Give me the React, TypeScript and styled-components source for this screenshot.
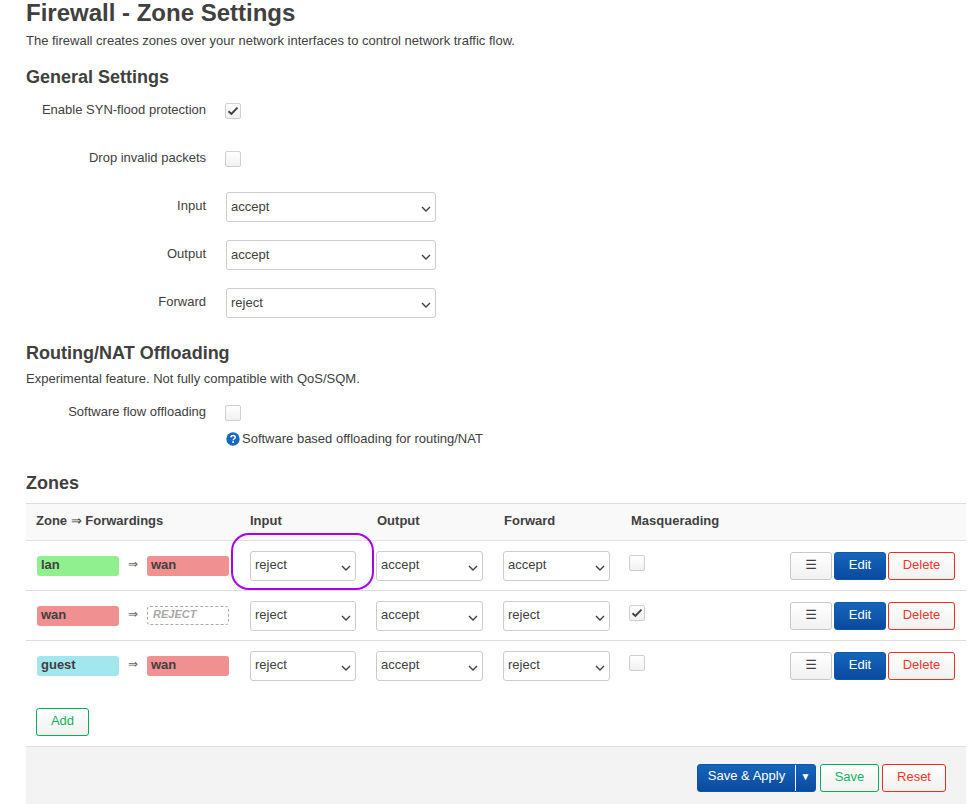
import React from "react";
import styled, { createGlobalStyle, css } from "styled-components";

const Global = createGlobalStyle`
  html, body { margin: 0; padding: 0; background: #fff; }
  body { font-family: "Liberation Sans", Arial, sans-serif; font-size: 13px; color: #404040; }
`;

const Page = styled.div`
  width: 940px;
  height: 804px;
  margin-left: 26px;
  display: flex;
  flex-direction: column;
  overflow: hidden;
`;

const Title = styled.h2`
  margin: 0;
  font-size: 24px;
  line-height: 25px;
  font-weight: 700;
  color: #404040;
`;

const Lead = styled.p`
  margin: 9px 0 0;
  font-size: 13px;
  line-height: 14px;
`;

const SectionTitle = styled.h3<{ $top: number }>`
  margin: ${(p) => p.$top}px 0 0;
  font-size: 18px;
  line-height: 20px;
  font-weight: 700;
  color: #404040;
`;

const FormRow = styled.div<{ $top?: number }>`
  display: grid;
  grid-template-columns: 180px 1fr;
  column-gap: 20px;
  height: 48px;
  margin-top: ${(p) => p.$top ?? 0}px;
`;

const Label = styled.label`
  text-align: right;
  line-height: 14px;
  padding-top: 7px;
`;

const FieldCheck = styled.div`
  padding-top: 7px;
  margin-left: -1px;
`;

const Box = styled.span`
  display: flex;
  align-items: center;
  justify-content: center;
  box-sizing: border-box;
  width: 16px;
  height: 16px;
  border: 1px solid #cfcfcf;
  border-radius: 2px;
  background: linear-gradient(#ffffff, #f1f1f1);
  box-shadow: inset 0 0 1px rgba(0, 0, 0, 0.05);
`;

const chevron =
  "url(\"data:image/svg+xml,%3Csvg xmlns='http://www.w3.org/2000/svg' width='10' height='6' viewBox='0 0 10 6'%3E%3Cpath d='M1 1l4 4 4-4' fill='none' stroke='%23404040' stroke-width='1.4'/%3E%3C/svg%3E\")";

const Select = styled.select<{ $width: number; $shift?: number }>`
  appearance: none;
  box-sizing: border-box;
  width: ${(p) => p.$width}px;
  height: 30px;
  margin-left: ${(p) => p.$shift ?? 0}px;
  padding: 0 0 2px 4px;
  font-family: "Liberation Sans", Arial, sans-serif;
  font-size: 13px;
  color: #404040;
  background: #fff ${chevron} no-repeat right 4px top 13px;
  border: 1px solid #cbcbcb;
  border-radius: 3px;
`;

const Intro = styled.p`
  margin: 9px 0 0;
  font-size: 13px;
  line-height: 14px;
`;

const Help = styled.div`
  display: flex;
  align-items: center;
  gap: 2px;
  margin: -14px 0 0 200px;
  height: 14px;
  font-size: 13px;
  line-height: 14px;
`;

const Table = styled.div`
  margin-top: 10px;
  border-top: 1px solid #dedede;
`;

const columns = css`
  display: grid;
  grid-template-columns: 214px 127px 127px 127px 1fr auto;
  padding: 0 11px 0 10px;
  border-bottom: 1px solid #dedede;
`;

const HeadRow = styled.div`
  ${columns}
  height: 36px;
  box-sizing: content-box;
  padding-bottom: 0;
  align-items: center;
  background: #f9f9f9;
  font-size: 13px;
  font-weight: 700;
  line-height: 14px;
  & > span { padding-bottom: 2px; }
`;

const ThinArrow = styled.span`
  font-weight: 400;
`;

const Row = styled.div<{ $last?: boolean }>`
  ${columns}
  height: 49px;
  align-items: center;
  ${(p) => p.$last && "border-bottom-color: transparent;"}
`;

const ZoneCell = styled.div`
  display: grid;
  grid-template-columns: 82px 28px 82px;
  margin-left: 1px;
  align-items: center;
`;

const Badge = styled.span<{ $color?: string }>`
  box-sizing: border-box;
  height: 20px;
  padding: 0 4px;
  border-radius: 3px;
  font-size: 13px;
  font-weight: 700;
  line-height: 17px;
  color: #404040;
  background: ${(p) => p.$color};
`;

const RejectBadge = styled.span`
  box-sizing: border-box;
  height: 19px;
  padding: 0 5px;
  border: 1px dashed #aaa;
  border-radius: 3px;
  font-size: 11px;
  font-style: italic;
  font-weight: 700;
  line-height: 15px;
  color: #a8a8a8;
  margin-top: -1px;
`;

const Arrow = styled.span`
  text-align: center;
  font-size: 12px;
  line-height: 16px;
  margin-top: -3px;
  color: #666;
`;

const InputCell = styled.div`
  position: relative;
`;

const Highlight = styled.div`
  position: absolute;
  left: -19px;
  top: -18px;
  width: 143px;
  height: 57px;
  box-sizing: border-box;
  border: 2px solid #aa00ee;
  border-radius: 18px;
  pointer-events: none;
`;

const MasqCell = styled.div`
  margin: -6px 0 0 -2px;
`;

const Actions = styled.div`
  display: flex;
  gap: 2px;
`;

const Btn = styled.button<{ $kind: "neutral" | "primary" | "danger" | "save"; $width: number }>`
  box-sizing: border-box;
  width: ${(p) => p.$width}px;
  height: 28px;
  padding: 0 0 3px;
  border-radius: 3px;
  font-family: "Liberation Sans", Arial, sans-serif;
  font-size: 13px;
  ${(p) =>
    p.$kind === "primary"
      ? css`
          color: #fff;
          border: 1px solid #0f55a8;
          background: linear-gradient(#1565bd, #0a4a9e);
        `
      : p.$kind === "danger"
      ? css`
          color: #f8342a;
          border: 1px solid #f32b1d;
          background: linear-gradient(#ffffff, #f1f1f1);
        `
      : p.$kind === "save"
      ? css`
          color: #12b260;
          border: 1px solid #0aab5a;
          background: linear-gradient(#ffffff, #f1f1f1);
        `
      : css`
          color: #404040;
          border: 1px solid #c8c8c8;
          background: linear-gradient(#ffffff, #f1f1f1);
        `}
`;

const AddRow = styled.div`
  margin: 17px 0 0 10px;
  display: flex;
`;

const Footer = styled.div`
  margin-top: 10px;
  flex: 1;
  display: flex;
  justify-content: flex-end;
  gap: 3px;
  padding: 17px 20px 0 0;
  background: #f3f3f3;
  border-top: 1px solid #dedede;
`;

const SplitButton = styled.div`
  box-sizing: border-box;
  display: flex;
  align-items: center;
  width: 119px;
  height: 28px;
  margin-right: 1px;
  border: 1px solid #0f55a8;
  border-radius: 3px;
  background: linear-gradient(#1565bd, #0a4a9e);
  color: #fff;
  font-size: 13px;
`;

const SplitLabel = styled.span`
  width: 98px;
  text-align: center;
  line-height: 22px;
  box-sizing: border-box;
  height: 26px;
  border-right: 1px solid #fff;
`;

const SplitCaret = styled.span`
  flex: 1;
  text-align: center;
  font-size: 10px;
  line-height: 24px;
  height: 26px;
`;

const MenuGlyph = styled.span`
  font-family: "DejaVu Sans", sans-serif;
  font-size: 13px;
`;

const Check = () => (
  <svg width="12" height="10" viewBox="0 0 12 10" aria-hidden="true">
    <path d="M1.5 5.2 4.4 8 10.5 1.6" fill="none" stroke="#404040" strokeWidth="1.9" />
  </svg>
);

const CheckBox = ({ checked }: { checked?: boolean }) => <Box>{checked && <Check />}</Box>;

const HelpIcon = () => (
  <svg width="14" height="14" viewBox="0 0 14 14" aria-hidden="true">
    <circle cx="7" cy="7" r="6.7" fill="#1567c0" />
    <path d="M4.9 5.4C5 4.1 5.9 3.4 7.1 3.4c1.2 0 2.1.7 2.1 1.8 0 1.6-2 1.6-2 3.1" fill="none" stroke="#fff" strokeWidth="1.5" />
    <rect x="6.3" y="9.2" width="1.7" height="1.7" fill="#fff" />
  </svg>
);

const Policy = ({ value, width, shift }: { value: string; width: number; shift?: number }) => (
  <Select $width={width} $shift={shift} defaultValue={value}>
    <option value="accept">accept</option>
    <option value="reject">reject</option>
    <option value="drop">drop</option>
  </Select>
);

const RED = "#f19090";
const zones = [
  { name: "lan", color: "#90f090", to: "wan", input: "reject", output: "accept", forward: "accept", masq: false },
  { name: "wan", color: RED, to: null, input: "reject", output: "accept", forward: "reject", masq: true },
  { name: "guest", color: "#a3e7ee", to: "wan", input: "reject", output: "accept", forward: "reject", masq: false },
];

export default function App() {
  return (
    <Page>
      <Global />
      <Title>Firewall - Zone Settings</Title>
      <Lead>The firewall creates zones over your network interfaces to control network traffic flow.</Lead>

      <SectionTitle $top={19}>General Settings</SectionTitle>
      <FormRow $top={9}>
        <Label>Enable SYN-flood protection</Label>
        <FieldCheck><CheckBox checked /></FieldCheck>
      </FormRow>
      <FormRow>
        <Label>Drop invalid packets</Label>
        <FieldCheck><CheckBox /></FieldCheck>
      </FormRow>
      <FormRow>
        <Label>Input</Label>
        <Policy value="accept" width={210} />
      </FormRow>
      <FormRow>
        <Label>Output</Label>
        <Policy value="accept" width={210} />
      </FormRow>
      <FormRow>
        <Label>Forward</Label>
        <Policy value="reject" width={210} />
      </FormRow>

      <SectionTitle $top={7}>Routing/NAT Offloading</SectionTitle>
      <Intro>Experimental feature. Not fully compatible with QoS/SQM.</Intro>
      <FormRow $top={12}>
        <Label>Software flow offloading</Label>
        <FieldCheck><CheckBox /></FieldCheck>
      </FormRow>
      <Help>
        <HelpIcon />
        Software based offloading for routing/NAT
      </Help>

      <SectionTitle $top={27}>Zones</SectionTitle>
      <Table>
        <HeadRow>
          <span>Zone <ThinArrow>⇒</ThinArrow> Forwardings</span>
          <span>Input</span>
          <span>Output</span>
          <span>Forward</span>
          <span>Masquerading</span>
          <span />
        </HeadRow>
        {zones.map((z, i) => (
          <Row key={z.name} $last={i === zones.length - 1}>
            <ZoneCell>
              <Badge $color={z.color}>{z.name}</Badge>
              <Arrow>⇒</Arrow>
              {z.to ? <Badge $color={RED}>{z.to}</Badge> : <RejectBadge>REJECT</RejectBadge>}
            </ZoneCell>
            <InputCell>
              <Policy value={z.input} width={106} />
              {i === 0 && <Highlight />}
            </InputCell>
            <Policy value={z.output} width={107} shift={-1} />
            <Policy value={z.forward} width={107} shift={-1} />
            <MasqCell><CheckBox checked={z.masq} /></MasqCell>
            <Actions>
              <Btn $kind="neutral" $width={42}><MenuGlyph>☰</MenuGlyph></Btn>
              <Btn $kind="primary" $width={52}>Edit</Btn>
              <Btn $kind="danger" $width={67}>Delete</Btn>
            </Actions>
          </Row>
        ))}
      </Table>
      <AddRow>
        <Btn $kind="save" $width={53}>Add</Btn>
      </AddRow>
      <Footer>
        <SplitButton>
          <SplitLabel>Save &amp; Apply</SplitLabel>
          <SplitCaret>▼</SplitCaret>
        </SplitButton>
        <Btn $kind="save" $width={59}>Save</Btn>
        <Btn $kind="danger" $width={64}>Reset</Btn>
      </Footer>
    </Page>
  );
}
